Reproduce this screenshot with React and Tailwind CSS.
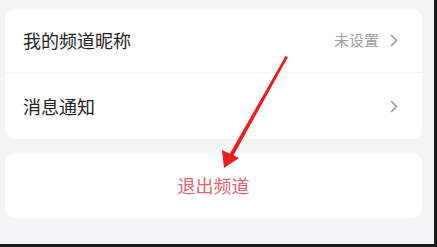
import React from "react";

function Chevron() {
  return (
    <svg width="8" height="13" viewBox="0 0 8 13" className="shrink-0">
      <path d="M1.5 1.5 L6.5 6.5 L1.5 11.5" fill="none" stroke="#9a9a9a" strokeWidth="1.6" strokeLinecap="round" strokeLinejoin="round" />
    </svg>
  );
}

export default function App() {
  return (
    <div
      className="w-[437px] h-[247px] flex flex-col bg-[#1a1a1a] overflow-hidden"
      style={{ fontFamily: '"Noto Sans CJK SC", "Noto Sans", sans-serif' }}
    >
      <div className="flex h-[244px]">
        <div className="relative w-[434px] h-[244px] bg-[#f3f5f7] pl-[5px] pt-[9px] flex flex-col gap-[14px]">
          <div className="w-[417px] bg-white rounded-[10px] flex flex-col">
            <div className="h-[64px] flex items-center justify-between pl-[18px] pr-[24px] border-b border-[#f4f5f7]">
              <span className="text-[18px] text-[#222]">我的频道昵称</span>
              <div className="flex items-center gap-[11px]">
                <span className="text-[15px] text-[#a0a0a0]">未设置</span>
                <Chevron />
              </div>
            </div>
            <div className="h-[66px] flex items-center justify-between pl-[18px] pr-[24px]">
              <span className="text-[18px] text-[#222]">消息通知</span>
              <Chevron />
            </div>
          </div>
          <div className="w-[417px] h-[65px] bg-white rounded-[10px] flex items-center justify-center">
            <span className="text-[18px] text-[#e5646e]">退出频道</span>
          </div>
          <svg className="absolute left-0 top-0" width="434" height="244" viewBox="0 0 434 244">
            <path d="M288 57 L285.5 56 L228 157 L231.5 159 Z" fill="#ee1c1c" />
            <path d="M222 150 L224 168 L239 158 Z" fill="#ee1c1c" />
          </svg>
        </div>
        <div className="w-[3px] bg-[#1a1a1a]" />
      </div>
      <div className="h-[3px] bg-[#1a1a1a]" />
    </div>
  );
}
